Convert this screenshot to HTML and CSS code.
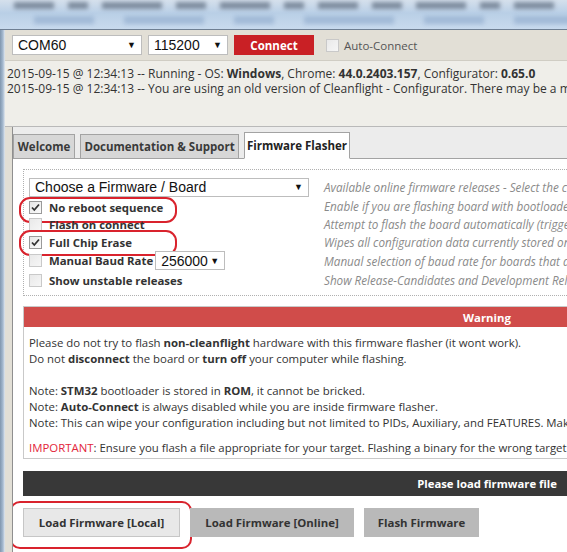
FILE: index.html
```html
<!DOCTYPE html>
<html>
<head>
<meta charset="utf-8">
<link rel="stylesheet" href="styles.css">
</head>
<body>
<div class="titlebar">
  <div class="blur-row top">
    <span class="blob w40"></span><span class="blob w20"></span><span class="blob w60"></span><span class="blob w30"></span><span class="blob w50"></span><span class="blob w20"></span><span class="blob w40"></span><span class="blob w30"></span><span class="blob w50"></span><span class="blob w20"></span><span class="blob w40"></span>
  </div>
  <div class="blur-row bottom">
    <span class="blob lt w60"></span><span class="blob lt w80"></span><span class="blob lt w40"></span><span class="blob lt w90"></span><span class="blob lt w60"></span><span class="blob lt w70"></span>
  </div>
</div>
<div class="main">
  <div class="frame"></div>
  <div class="app">
    <div class="toolbar">
      <div class="select port"><span>COM60</span><span class="arrow">▼</span></div>
      <div class="select baud"><span>115200</span><span class="arrow">▼</span></div>
      <div class="connect">Connect</div>
      <div class="auto"><span class="cb off"></span><span>Auto-Connect</span></div>
    </div>
    <div class="log">
      <div class="line">2015-09-15 @ 12:34:13 -- Running - OS: <b>Windows</b>, Chrome: <b>44.0.2403.157</b>, Configurator: <b>0.65.0</b></div>
      <div class="line">2015-09-15 @ 12:34:13 -- You are using an old version of Cleanflight - Configurator. There may be a more recent version available.</div>
    </div>
    <div class="tabwrap">
      <div class="tabs">
        <div class="tab">Welcome</div>
        <div class="tab">Documentation &amp; Support</div>
        <div class="tab active">Firmware Flasher</div>
      </div>
      <div class="panel">
        <div class="options">
          <div class="opt">
            <div class="select board"><span>Choose a Firmware / Board</span><span class="arrow">▼</span></div>
          </div>
          <div class="desc first">Available online firmware releases - Select the correct firmware appropriate for your board.</div>

          <div class="opt hl">
            <span class="cb on"><svg viewBox="0 0 13 13" width="13" height="13"><path d="M3 6.5 L5.3 9 L10 3.5" fill="none" stroke="#333" stroke-width="1.8"/></svg></span><span class="lbl">No reboot sequence</span>
          </div>
          <div class="desc">Enable if you are flashing board with bootloader pads jumped or board is in DFU mode.</div>

          <div class="opt">
            <span class="cb off"></span><span class="lbl">Flash on connect</span>
          </div>
          <div class="desc">Attempt to flash the board automatically (triggered by newly detected serial port)</div>

          <div class="opt hl">
            <span class="cb on"><svg viewBox="0 0 13 13" width="13" height="13"><path d="M3 6.5 L5.3 9 L10 3.5" fill="none" stroke="#333" stroke-width="1.8"/></svg></span><span class="lbl">Full Chip Erase</span>
          </div>
          <div class="desc">Wipes all configuration data currently stored on the board</div>

          <div class="opt baudrow">
            <span class="cb off"></span><span class="lbl">Manual Baud Rate</span>
            <div class="select small"><span>256000</span><span class="arrow">▼</span></div>
          </div>
          <div class="desc">Manual selection of baud rate for boards that don't support the default speed</div>

          <div class="opt last">
            <span class="cb off"></span><span class="lbl">Show unstable releases</span>
          </div>
          <div class="desc last">Show Release-Candidates and Development Releases.</div>
        </div>

        <div class="warning">
          <div class="whead">Warning</div>
          <div class="wbody">
            <p>Please do not try to flash <b>non-cleanflight</b> hardware with this firmware flasher (it wont work).<br>
            Do not <b>disconnect</b> the board or <b>turn off</b> your computer while flashing.<br><br>
            Note: <b>STM32</b> bootloader is stored in <b>ROM</b>, it cannot be bricked.<br>
            Note: <b>Auto-Connect</b> is always disabled while you are inside firmware flasher.<br>
            Note: This can wipe your configuration including but not limited to PIDs, Auxiliary, and FEATURES. Make sure you have a backup.</p>
            <p class="imp"><span class="red">IMPORTANT</span>: Ensure you flash a file appropriate for your target. Flashing a binary for the wrong target can cause bad things to happen.</p>
          </div>
        </div>

        <div class="status">Please load firmware file</div>

        <div class="buttons">
          <div class="btn local hl">Load Firmware [Local]</div>
          <div class="btn dis">Load Firmware [Online]</div>
          <div class="btn dis">Flash Firmware</div>
        </div>
      </div>
    </div>
  </div>
</div>
</body>
</html>
```

FILE: styles.css
```css
* { box-sizing: border-box; }
html, body { margin: 0; padding: 0; }
body {
  width: 567px;
  height: 552px;
  overflow: hidden;
  background: #e2dfd6;
  font-family: "Open Sans", "Noto Sans", sans-serif;
  font-size: 11px;
  color: #333;
  display: flex;
  flex-direction: column;
}

/* title bar */
.titlebar {
  height: 30px;
  flex: none;
  background: linear-gradient(180deg, #d5e0ec 0%, #b9cfe6 45%, #c8daee 100%);
  border-bottom: 1px solid #6e7f93;
  overflow: hidden;
  padding: 2px 0 0 14px;
}
.blur-row { display: flex; gap: 14px; white-space: nowrap; }
.blur-row.top { height: 7px; }
.blur-row.bottom { margin-top: 7px; height: 8px; padding-left: 20px; gap: 30px; }
.blob { display: block; height: 100%; background: #5f6d80; filter: blur(2px); flex: none; opacity: 0.7; }
.blob.lt { background: #9fb8d6; opacity: 0.9; }
.w20 { width: 20px; } .w30 { width: 30px; } .w40 { width: 40px; } .w50 { width: 50px; }
.w60 { width: 60px; } .w70 { width: 70px; } .w80 { width: 80px; } .w90 { width: 90px; }

.main { flex: 1; display: flex; min-height: 0; }
.frame {
  width: 5px;
  flex: none;
  background: linear-gradient(90deg, #8096ae 0%, #a7bbd1 60%, #e4e9ef 100%);
}
.app { flex: 1; display: flex; flex-direction: column; min-width: 0; overflow: hidden; }

/* toolbar */
.toolbar {
  height: 30px;
  flex: none;
  display: flex;
  align-items: flex-start;
  padding: 5px 0 0 7px;
}
.select {
  display: flex;
  align-items: center;
  justify-content: space-between;
  background: #fff;
  border: 1px solid #bdbdbd;
  font-family: "Liberation Sans", Arial, sans-serif;
  font-size: 14px;
  color: #111;
  height: 20px;
  padding: 0 5px 0 5px;
  flex: none;
}
.select .arrow { font-size: 9px; color: #111; }
.select.port { width: 130px; margin-right: 6px; }
.select.baud { width: 80px; margin-right: 6px; }
.connect {
  width: 80px;
  height: 20px;
  background: #c92025;
  color: #fff;
  font-weight: bold;
  font-size: 11.5px;
  display: flex;
  align-items: center;
  justify-content: center;
  flex: none;
}
.auto { display: flex; align-items: center; height: 20px; margin-left: 12px; color: #555; font-size: 11.5px; gap: 5px; }

.cb {
  width: 13px;
  height: 13px;
  flex: none;
  display: inline-block;
  border: 1px solid #9a9a9a;
  background: linear-gradient(135deg, #e6e6e6, #fbfbfb);
  position: relative;
}
.cb svg { position: absolute; left: -1px; top: -1px; }
.cb.off { border-color: #c9c9c9; background: linear-gradient(135deg, #e9e9e9, #f6f6f6); }

/* log */
.log {
  height: 67px;
  flex: none;
  background: #efeee9;
  border-top: 1px solid #d0cdc4;
  border-bottom: 1px solid #b9b9b9;
  padding: 5px 0 0 2px;
  white-space: nowrap;
  overflow: hidden;
  font-size: 12px;
}
.log .line { line-height: 15px; }
.log b { font-weight: 700; }

/* tabs */
.tabwrap {
  flex: 1;
  margin-left: 7px;
  border-left: 1px solid #8f8f8f;
  display: flex;
  flex-direction: column;
  background: #ececec;
  min-height: 0;
}
.tabs {
  height: 32px;
  flex: none;
  display: flex;
  align-items: flex-end;
  gap: 5px;
  border-bottom: 1px solid #a3a3a3;
  padding-left: 0;
}
.tab {
  height: 25px;
  margin-bottom: -1px;
  background: #d7d7d7;
  border: 1px solid #a3a3a3;
  font-weight: 700;
  font-size: 11.5px;
  color: #3a3a3a;
  display: flex;
  align-items: center;
  justify-content: center;
  padding: 0 3px;
  white-space: nowrap;
}
.tab:nth-child(1) { width: 62px; }
.tab:nth-child(2) { width: 159px; }
.tab.active { width: 106px; height: 27px; background: #fff; border-bottom-color: #fff; color: #222; }

.panel {
  flex: 1;
  background: #fff;
  padding: 10px 0 0 10px;
  overflow: hidden;
}

/* options */
.options {
  width: 1000px;
  border: 1px dotted #b0b0b0;
  display: grid;
  grid-template-columns: 295px 1fr;
  grid-template-rows: 20px 18px 18px 18px 19px 18px;
  padding: 7px 0 7px 5px;
}
.opt { display: flex; align-items: center; position: relative; white-space: nowrap; }
.opt:nth-child(3) { margin-top: 3px; }
.desc { display: flex; align-items: center; font-style: italic; color: #8a8a8a; white-space: nowrap; font-size: 11.7px; }
.options > .opt:first-child, .options > .desc.first { height: 20px; }
.lbl { font-weight: 700; color: #333; margin-left: 7px; font-size: 11.4px; }
.select.board { width: 280px; height: 19px; }
.select.small { width: 70px; height: 19px; margin-left: 2px; }
.opt.last { margin-top: 2px; }
.desc.last { margin-top: 2px; }

.hl::before {
  content: "";
  position: absolute;
  border: 2px solid #d9232d;
  border-radius: 11px;
  pointer-events: none;
}
.opt.hl::before { left: -10px; top: -3px; width: 154px; height: 22px; }

/* warning */
.warning {
  width: 928px;
  margin-top: 10px;
  border: 1px solid #c9c9c9;
}
.whead {
  height: 20px;
  background: #d04c4a;
  color: #fff;
  font-weight: 700;
  font-size: 11.4px;
  display: flex;
  align-items: center;
  justify-content: center;
}
.wbody { padding: 8px 0 2px 5px; white-space: nowrap; font-size: 11.4px; }
.wbody p { margin: 0; line-height: 16px; }
.wbody p.imp { margin-top: 9px; }
.red { color: #e3263a; }

/* status bar */
.status {
  width: 544px;
  height: 25px;
  margin-top: 12px;
  background: #383838;
  color: #fff;
  font-weight: 700;
  font-size: 11.3px;
  display: flex;
  align-items: center;
  justify-content: flex-end;
  padding-right: 10px;
}

.buttons { display: flex; gap: 10px; margin-top: 12px; }
.btn {
  height: 29px;
  display: flex;
  align-items: center;
  justify-content: center;
  font-weight: 700;
  font-size: 11.4px;
  color: #333;
  position: relative;
  white-space: nowrap;
}
.btn.local { width: 157px; background: #e8e8e8; border: 1px solid #c6c6c6; }
.btn.dis { background: #b9b9b9; }
.btn.dis:nth-child(2) { width: 164px; }
.btn.dis:nth-child(3) { width: 115px; }
.btn.hl::before { left: -14px; top: -8px; width: 178px; height: 44px; border-radius: 10px; }
```
